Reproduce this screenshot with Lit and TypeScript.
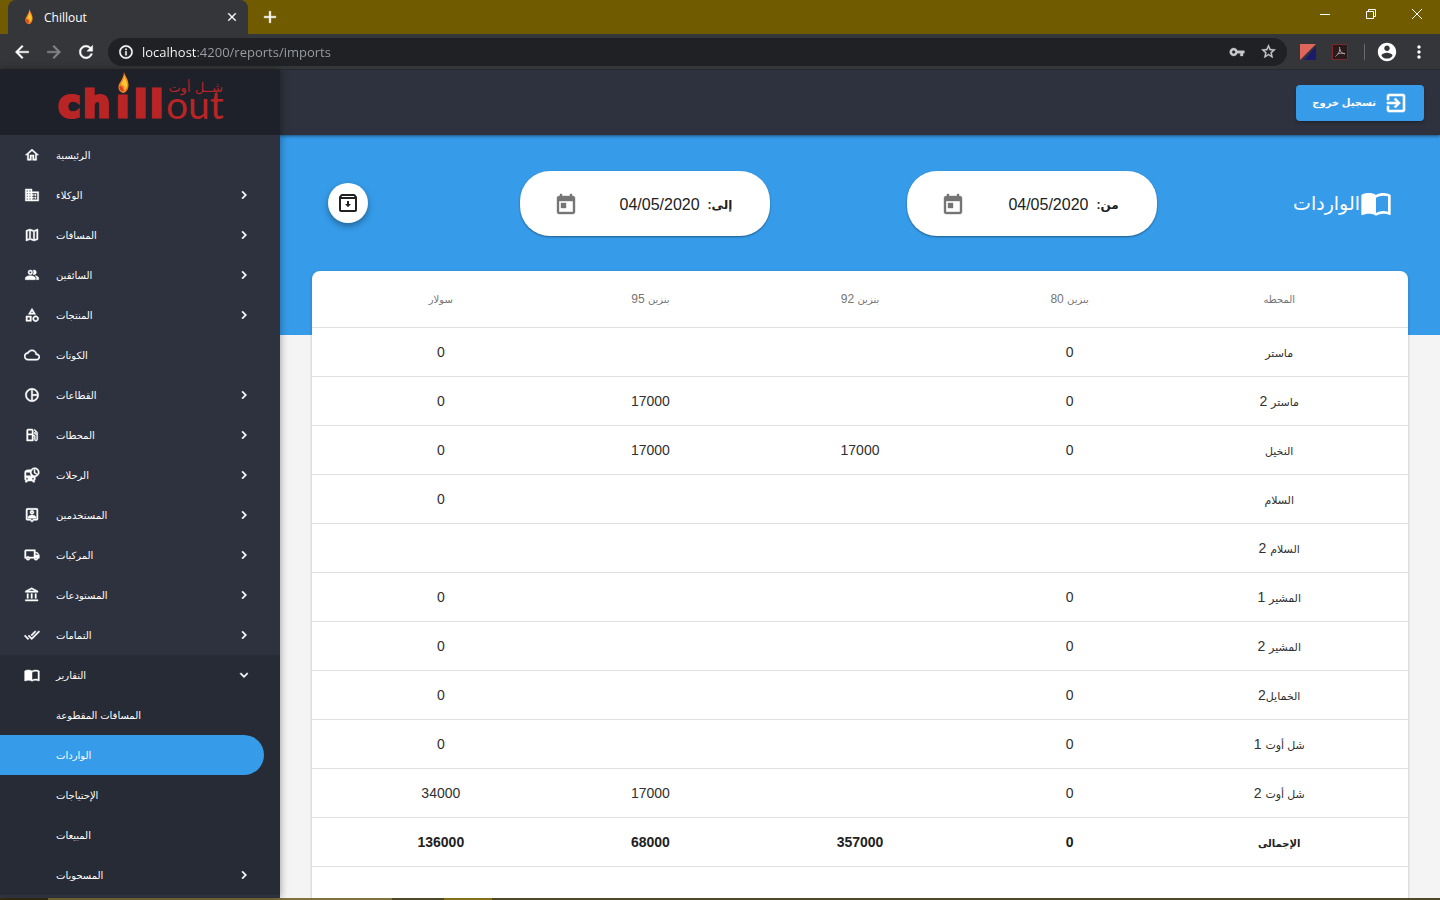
import { LitElement, html, svg, css, nothing } from "lit";
import { customElement, property, state } from "lit/decorators.js";
import { classMap } from "lit/directives/class-map.js";

const ICONS: Record<string, string> = {
  home: "M12 5.69l5 4.5V18h-2v-6H9v6H7v-7.81l5-4.5M12 3L2 12h3v8h6v-6h2v6h6v-8h3L12 3z",
  business: "M12 7V3H2v18h20V7H12zM6 19H4v-2h2v2zm0-4H4v-2h2v2zm0-4H4V9h2v2zm0-4H4V5h2v2zm4 12H8v-2h2v2zm0-4H8v-2h2v2zm0-4H8V9h2v2zm0-4H8V5h2v2zm10 12h-8v-2h2v-2h-2v-2h2v-2h-2V9h8v10zm-2-8h-2v2h2v-2zm0 4h-2v2h2v-2z",
  map: "M20.5 3l-.16.03L15 5.1 9 3 3.36 4.9c-.21.07-.36.25-.36.48V20.5c0 .28.22.5.5.5l.16-.03L9 18.9l6 2.1 5.64-1.9c.21-.07.36-.25.36-.48V3.5c0-.28-.22-.5-.5-.5zM10 5.47l4 1.4v11.66l-4-1.4V5.47zm-5 .99l3-1.01v11.7l-3 1.16V6.46zm14 11.08l-3 1.01V6.86l3-1.16v11.84z",
  people: "M16.5 13.1c1.5.9 2.3 2.1 2.3 3.4V19H22v-2.5c0-1.9-2.8-3.1-5.5-3.4zM15 11.5a3.5 3.5 0 0 0 0-7c-.5 0-.9.1-1.3.2a5.5 5.5 0 0 1 0 6.6c.4.1.8.2 1.3.2zM9.5 11.5a3.5 3.5 0 1 0 0-7 3.5 3.5 0 0 0 0 7zm0-5.2a1.7 1.7 0 1 1 0 3.4 1.7 1.7 0 0 1 0-3.4zM9.5 13C7 13 2 14.2 2 16.6V19h15v-2.4c0-2.4-5-3.6-7.5-3.6z",
  category: "M12 2l-5.5 9h11L12 2zm0 3.84L13.93 9h-3.87L12 5.84zM17.5 13c-2.49 0-4.5 2.01-4.5 4.5s2.01 4.5 4.5 4.5 4.5-2.01 4.5-4.5-2.01-4.5-4.5-4.5zm0 7c-1.38 0-2.5-1.12-2.5-2.5s1.12-2.5 2.5-2.5 2.5 1.12 2.5 2.5-1.12 2.5-2.5 2.5zM3 21.5h8v-8H3v8zm2-6h4v4H5v-4z",
  cloud: "M19.35 10.04C18.67 6.59 15.64 4 12 4 9.11 4 6.6 5.64 5.35 8.04 2.34 8.36 0 10.91 0 14c0 3.31 2.69 6 6 6h13c2.76 0 5-2.24 5-5 0-2.64-2.05-4.78-4.65-4.96zM19 18H6c-2.21 0-4-1.79-4-4 0-2.05 1.53-3.76 3.56-3.97l1.07-.11.5-.95C8.08 7.14 9.94 6 12 6c2.62 0 4.88 1.86 5.39 4.43l.3 1.5 1.53.11c1.56.1 2.78 1.41 2.78 2.96 0 1.65-1.35 3-3 3z",
  pie: "M12 2C6.48 2 2 6.48 2 12s4.48 10 10 10 10-4.48 10-10S17.52 2 12 2zm1 2.07c3.61.45 6.48 3.33 6.93 6.93H13V4.07zM4 12c0-4.06 3.07-7.44 7-7.93v15.87c-3.93-.5-7-3.88-7-7.94zm9 7.93V13h6.93c-.45 3.61-3.32 6.48-6.93 6.93z",
  gas: "M19.77 7.23l.01-.01-3.72-3.72L15 4.56l2.11 2.11c-.94.36-1.61 1.26-1.61 2.33 0 1.38 1.12 2.5 2.5 2.5.36 0 .69-.08 1-.21v7.21c0 .55-.45 1-1 1s-1-.45-1-1V14c0-1.1-.9-2-2-2h-1V5c0-1.1-.9-2-2-2H6c-1.1 0-2 .9-2 2v16h10v-7.5h1.5v5c0 1.38 1.12 2.5 2.5 2.5s2.5-1.12 2.5-2.5V9c0-.69-.28-1.32-.73-1.77zM12 19H6v-7h6v7zm0-9H6V5h6v5zm6 0c-.55 0-1-.45-1-1s.45-1 1-1 1 .45 1 1-.45 1-1 1z",
  departure: "M16 1c-2.4 0-4.52 1.21-5.78 3.05C9.84 4 9.42 4 9 4c-4.42 0-8 .5-8 4v10c0 .88.39 1.67 1 2.22V22c0 .55.45 1 1 1h1c.55 0 1-.45 1-1v-1h8v1c0 .55.45 1 1 1h1c.55 0 1-.45 1-1v-1.78c.61-.55 1-1.34 1-2.22v-3.08c3.39-.49 6-3.39 6-6.92 0-3.87-3.13-7-7-7zM4.5 19c-.83 0-1.5-.67-1.5-1.5S3.67 16 4.5 16s1.5.67 1.5 1.5S5.33 19 4.5 19zM3 13V8h6c0 1.96.81 3.73 2.11 5H3zm10.5 6c-.83 0-1.5-.67-1.5-1.5s.67-1.5 1.5-1.5 1.5.67 1.5 1.5-.67 1.5-1.5 1.5zm2.5-6c-2.76 0-5-2.24-5-5s2.24-5 5-5 5 2.24 5 5-2.24 5-5 5zm.5-9H15v5l3.62 2.16.75-1.23-2.87-1.68z",
  person: "M19 2H5c-1.11 0-2 .9-2 2v14c0 1.1.89 2 2 2h4l3 3 3-3h4c1.1 0 2-.9 2-2V4c0-1.1-.9-2-2-2zm0 16h-4.83L12 20.17 9.83 18H5V4h14v14zM12 11c1.65 0 3-1.35 3-3s-1.35-3-3-3-3 1.35-3 3 1.35 3 3 3zm0-4c.55 0 1 .45 1 1s-.45 1-1 1-1-.45-1-1 .45-1 1-1zm6 8.58c0-2.5-3.97-3.58-6-3.58s-6 1.08-6 3.58V17h12v-1.42z",
  truck: "M20 8h-3V4H3c-1.1 0-2 .9-2 2v11h2c0 1.66 1.34 3 3 3s3-1.34 3-3h6c0 1.66 1.34 3 3 3s3-1.34 3-3h2v-5l-3-4zm-.5 1.5l1.96 2.5H17V9.5h2.5zM6 18c-.55 0-1-.45-1-1s.45-1 1-1 1 .45 1 1-.45 1-1 1zm2.22-3c-.55-.61-1.33-1-2.22-1s-1.67.39-2.22 1H3V6h12v9H8.22zM18 18c-.55 0-1-.45-1-1s.45-1 1-1 1 .45 1 1-.45 1-1 1z",
  bank: "M6.5 10h-2v7h2v-7zm6 0h-2v7h2v-7zm8.5 9H2v2h19v-2zm-2.5-9h-2v7h2v-7zM11.5 1L2 6v2h19V6l-9.5-5zm0 2.26L16.71 6H6.29l5.21-2.74z",
  doneAll: "M18 7l-1.41-1.41-6.34 6.34 1.41 1.41L18 7zm4.24-1.41L11.66 16.17 7.48 12l-1.41 1.41L11.66 19l12-12-1.42-1.41zM.41 13.41L6 19l1.41-1.41L1.83 12 .41 13.41z",
  book: "M21 5c-1.11-.35-2.33-.5-3.5-.5-1.95 0-4.05.4-5.5 1.5-1.45-1.1-3.55-1.5-5.5-1.5S2.45 4.9 1 6v14.65c0 .25.25.5.5.5.1 0 .15-.05.25-.05C3.1 20.45 5.05 20 6.5 20c1.95 0 4.05.4 5.5 1.5 1.35-.85 3.8-1.5 5.5-1.5 1.65 0 3.35.3 4.75 1.05.1.05.15.05.25.05.25 0 .5-.25.5-.5V6c-.6-.45-1.25-.75-2-1zm0 13.5c-1.1-.35-2.3-.5-3.5-.5-1.7 0-4.15.65-5.5 1.5V8c1.35-.85 3.8-1.5 5.5-1.5 1.2 0 2.4.15 3.5.5v11.5z",
  right: "M10 6L8.59 7.41 13.17 12l-4.58 4.59L10 18l6-6z",
  down: "M16.59 8.59L12 13.17 7.41 8.59 6 10l6 6 6-6z",
  exit: "M10.09 15.59L11.5 17l5-5-5-5-1.41 1.41L12.67 11H3v2h9.67l-2.58 2.59zM19 3H5c-1.11 0-2 .9-2 2v4h2V5h14v14H5v-4H3v4c0 1.1.89 2 2 2h14c1.1 0 2-.9 2-2V5c0-1.1-.9-2-2-2z",
  archive: "M20.54 5.23l-1.39-1.68C18.88 3.21 18.47 3 18 3H6c-.47 0-.88.21-1.16.55L3.46 5.23C3.17 5.57 3 6.02 3 6.5V19c0 1.1.9 2 2 2h14c1.1 0 2-.9 2-2V6.5c0-.48-.17-.93-.46-1.27zM6.24 5h11.52l.83 1H5.42l.82-1zM5 19V8h14v11H5zm8-9h-2v3H9l3 3.2 3-3.2h-2z",
  calendar: "M19 3h-1V1h-2v2H8V1H6v2H5c-1.11 0-1.99.9-1.99 2L3 19c0 1.1.89 2 2 2h14c1.1 0 2-.9 2-2V5c0-1.1-.9-2-2-2zm0 16H5V8h14v11zM7 10h5v5H7z",
  back: "M20 11H7.83l5.59-5.59L12 4l-8 8 8 8 1.41-1.41L7.83 13H20v-2z",
  forward: "M12 4l-1.41 1.41L16.17 11H4v2h12.17l-5.58 5.59L12 20l8-8z",
  reload: "M17.65 6.35C16.2 4.9 14.21 4 12 4c-4.42 0-7.99 3.58-7.99 8s3.57 8 7.99 8c3.73 0 6.84-2.55 7.73-6h-2.08c-.82 2.33-3.04 4-5.65 4-3.31 0-6-2.69-6-6s2.69-6 6-6c1.66 0 3.14.69 4.22 1.78L13 11h7V4l-2.35 2.35z",
  info: "M11 7h2v2h-2zm0 4h2v6h-2zm1-9C6.48 2 2 6.48 2 12s4.48 10 10 10 10-4.48 10-10S17.52 2 12 2zm0 18c-4.41 0-8-3.59-8-8s3.59-8 8-8 8 3.59 8 8-3.59 8-8 8z",
  key: "M12.65 10C11.83 7.67 9.61 6 7 6c-3.31 0-6 2.69-6 6s2.69 6 6 6c2.61 0 4.83-1.67 5.65-4H17v4h4v-4h2v-4H12.65zM7 14.5c-1.4 0-2.5-1.1-2.5-2.5s1.1-2.5 2.5-2.5 2.5 1.1 2.5 2.5-1.1 2.5-2.5 2.5z",
  star: "M22 9.24l-7.19-.62L12 2 9.19 8.63 2 9.24l5.46 4.73L5.82 21 12 17.27 18.18 21l-1.63-7.03L22 9.24zM12 15.4l-3.76 2.27 1-4.28-3.32-2.88 4.38-.38L12 6.1l1.71 4.04 4.38.38-3.32 2.88 1 4.28L12 15.4z",
  account: "M12 2C6.48 2 2 6.48 2 12s4.48 10 10 10 10-4.48 10-10S17.52 2 12 2zm0 3c1.66 0 3 1.34 3 3s-1.34 3-3 3-3-1.34-3-3 1.34-3 3-3zm0 14.2c-2.5 0-4.71-1.28-6-3.22.03-1.99 4-3.08 6-3.08 1.99 0 5.97 1.09 6 3.08-1.29 1.94-3.5 3.22-6 3.22z",
  more: "M12 8c1.1 0 2-.9 2-2s-.9-2-2-2-2 .9-2 2 .9 2 2 2zm0 2c-1.1 0-2 .9-2 2s.9 2 2 2 2-.9 2-2-.9-2-2-2zm0 6c-1.1 0-2 .9-2 2s.9 2 2 2 2-.9 2-2-.9-2-2-2z",
  close: "M19 6.41L17.59 5 12 10.59 6.41 5 5 6.41 10.59 12 5 17.59 6.41 19 12 13.41 17.59 19 19 17.59 13.41 12z",
  plus: "M19 13h-6v6h-2v-6H5v-2h6V5h2v6h6v2z",
};

const icon = (name: string, size: number) =>
  html`<svg width=${size} height=${size} viewBox="0 0 24 24" fill="currentColor" aria-hidden="true"><path fill-rule="evenodd" d=${ICONS[name]}></path></svg>`;

const flame = svg`
  <path fill="#f58220" d="M6 0C7 4 10.5 7 10.5 13c0 4-2 7-4.7 8C2 20.5 0 17.5.5 14 1 10.5 5.5 7 6 0z"></path>
  <path fill="#fdc82f" d="M6 3c.8 4 3.4 6 3.2 10-.2 2.5-1.5 4-2.7 5 .5-4-.5-5-3.5-5C4 10 6 8 6 3z"></path>
  <path fill="#d8431f" d="M1.5 14c2 0 4 1.5 4 5.5C3 19.5 1 17 1.5 14z"></path>`;

@customElement("browser-bar")
export class BrowserBar extends LitElement {
  static styles = css`
    :host { display: block; font-family: "Open Sans", "Noto Sans", sans-serif; color: #fff; background: #35363a; }
    svg { display: block; flex: none; }
    button { display: flex; align-items: center; justify-content: center; border: 0; padding: 0; background: none; color: inherit; }
    .tabs { display: flex; height: 34px; background: #705b00; padding-left: 8px; }
    .tab { display: flex; align-items: center; width: 240px; box-sizing: border-box; padding: 0 8px 0 16px; background: #35363a; border-radius: 8px 8px 0 0; font-size: 12px; }
    .tab span { flex: 1; padding-left: 10px; }
    .tab button { width: 16px; height: 16px; }
    .tab button svg, .add svg, .nav svg, .address svg { stroke: currentColor; stroke-width: 0.5; }
    .add { width: 44px; }
    .window { display: flex; margin-left: auto; }
    .window button { width: 46px; height: 28px; }
    .bar { display: flex; align-items: center; height: 36px; padding: 0 11px 0 12px; box-sizing: border-box; border-bottom: 1px solid #28292d; }
    .nav { width: 20px; height: 20px; margin-right: 12px; }
    .off { color: #85868a; }
    .address { display: flex; align-items: center; flex: 1; height: 28px; padding: 0 10px; border-radius: 14px; background: #202124; }
    .url { flex: 1; min-width: 0; margin: 0 8px; border: 0; padding: 0; outline: 0; font: inherit; font-size: 13px; color: transparent; background: linear-gradient(90deg, #fff 55px, #9aa0a6 55px); -webkit-background-clip: text; background-clip: text; }
    .tools { display: flex; align-items: center; gap: 15px; color: #c8cacd; }
    .ext { display: flex; align-items: center; gap: 12px; padding-left: 13px; }
    .ext svg { margin-right: 3px; }
    .line { width: 1px; height: 16px; background: #6b6c70; }
    .ext button { width: 20px; height: 20px; }
    .ext button svg { margin: 0; }
  `;
  render() {
    return html`
      <div class="tabs">
        <div class="tab">
          <svg width="10" height="16" viewBox="0 0 11 22" aria-hidden="true">${flame}</svg>
          <span>Chillout</span>
          <button aria-label="Close tab">${icon("close", 14)}</button>
        </div>
        <button class="add" aria-label="New tab">${icon("plus", 20)}</button>
        <div class="window">
          <button aria-label="Minimize"><svg width="10" height="10" viewBox="0 0 10 10" stroke="#fff"><path d="M0 5.5h10"></path></svg></button>
          <button aria-label="Restore"><svg width="10" height="10" viewBox="0 0 10 10" stroke="#fff" fill="none"><path d="M.5 2.5h7v7h-7zM2.500 2.500v-2h7v7h-2"></path></svg></button>
          <button aria-label="Close"><svg width="10" height="10" viewBox="0 0 10 10" stroke="#fff"><path d="M0 0l10 10M10 0L0 10"></path></svg></button>
        </div>
      </div>
      <div class="bar">
        <button class="nav" aria-label="Back">${icon("back", 20)}</button>
        <button class="nav off" aria-label="Forward">${icon("forward", 20)}</button>
        <button class="nav" aria-label="Reload">${icon("reload", 20)}</button>
        <div class="address">
          ${icon("info", 16)}
          <input class="url" type="text" aria-label="Address" value="localhost:4200/reports/imports" />
          <div class="tools">${icon("key", 16)}${icon("star", 17)}</div>
        </div>
        <div class="ext">
          <svg width="16" height="16" viewBox="0 0 16 16" aria-hidden="true"><path fill="#e0655a" d="M0 0h16L0 16z"></path><path fill="#1b1a6b" d="M16 2v14H4z"></path></svg>
          <svg width="18" height="18" viewBox="0 0 18 18" fill="none" aria-hidden="true"><path fill="#2a1a1c" stroke="#7a2a2c" d="M1.5 1.5h15v15h-15z"></path><path stroke="#a9a9ab" d="M8.5 4c1 4-1.5 7.5-4 9.5M8.8 6c.5 3 2.5 4.5 5.2 5M6.500 11c2-1 4-1 7.500-.4"></path></svg>
          <span class="line"></span>
          <button aria-label="Profile">${icon("account", 22)}</button>
          <button aria-label="Menu">${icon("more", 20)}</button>
        </div>
      </div>
    `;
  }
}

interface NavItem { label: string; icon?: string; expandable?: boolean; current?: boolean; children?: NavItem[] }

const NAV: NavItem[] = [
  { label: "الرئيسية", icon: "home" },
  { label: "الوكلاء", icon: "business", expandable: true },
  { label: "المسافات", icon: "map", expandable: true },
  { label: "السائقين", icon: "people", expandable: true },
  { label: "المنتجات", icon: "category", expandable: true },
  { label: "الكوتات", icon: "cloud" },
  { label: "القطاعات", icon: "pie", expandable: true },
  { label: "المحطات", icon: "gas", expandable: true },
  { label: "الرحلات", icon: "departure", expandable: true },
  { label: "المستخدمين", icon: "person", expandable: true },
  { label: "المركبات", icon: "truck", expandable: true },
  { label: "المستودعات", icon: "bank", expandable: true },
  { label: "التمامات", icon: "doneAll", expandable: true },
  {
    label: "التقارير", icon: "book", expandable: true,
    children: [
      { label: "المسافات المقطوعة" },
      { label: "الواردات", current: true },
      { label: "الإحتياجات" },
      { label: "المبيعات" },
      { label: "المسحوبات", expandable: true },
    ],
  },
];

@customElement("side-nav")
export class SideNav extends LitElement {
  @state() private open = "التقارير";

  static styles = css`
    :host { display: flex; flex-direction: column; width: 280px; flex: none; overflow: hidden; background: #2d323e; color: #fff; box-shadow: 0 0 8px rgba(0, 0, 0, 0.4); z-index: 2; }
    svg { display: block; flex: none; }
    .brand { display: flex; justify-content: center; height: 65px; flex: none; background: #1e2129; }
    .menu { list-style: none; margin: 0; padding: 0; }
    .item { display: flex; align-items: center; width: 100%; height: 40px; padding: 0 28px 0 24px; box-sizing: border-box; border: 0; background: none; color: inherit; font: inherit; font-size: 10px; text-decoration: none; text-align: left; }
    .item span { flex: 1; padding-left: 16px; text-align: left; }
    .item svg { stroke: currentColor; stroke-width: 0.7; }
    .sub .item span { padding-left: 32px; }
    .opened { background: #272b35; }
    .sub .current { width: 264px; background: #369be9; border-radius: 0 20px 20px 0; }
  `;

  private row(item: NavItem): unknown {
    const opened = !!item.children && this.open === item.label;
    const body = html`${item.icon ? icon(item.icon, 16) : nothing}<span>${item.label}</span>${item.expandable ? icon(opened ? "down" : "right", 16) : nothing}`;
    return html`
      <li class=${classMap({ opened })}>
        ${item.expandable
          ? html`<button class="item" aria-expanded=${opened ? "true" : "false"} @click=${() => (this.open = opened ? "" : item.label)}>${body}</button>`
          : html`<a class=${classMap({ item: true, current: !!item.current })} href="#">${body}</a>`}
        ${opened ? html`<ul class="menu sub">${item.children!.map((c) => this.row(c))}</ul>` : nothing}
      </li>`;
  }

  render() {
    return html`
      <div class="brand">
        <svg width="170" height="65" viewBox="0 0 170 65" role="img" aria-label="Chillout">
          <g fill="#b92525">
            <text x="3 28 61 79 95" y="47" font-family="'DejaVu Sans', sans-serif" font-size="38" font-weight="700" stroke="#b92525" stroke-width="3">chıll</text>
            <text x="111" y="49" font-family="Lato, sans-serif" font-size="39">out</text>
            <text x="168" y="22" font-size="13" font-family="'DejaVu Sans', sans-serif" text-anchor="end" direction="ltr">شــل أوت</text>
          </g>
          <svg x="63" y="2" width="11" height="22" viewBox="0 0 11 22">${flame}</svg>
        </svg>
      </div>
      <nav><ul class="menu">${NAV.map((i) => this.row(i))}</ul></nav>
    `;
  }
}

interface Row { name: string; num?: string; values: string[]; total?: boolean }

const ROWS: Row[] = [
  { name: "ماستر", values: ["0", "", "", "0"] },
  { name: "ماستر", num: " 2", values: ["0", "", "17000", "0"] },
  { name: "النخيل", values: ["0", "17000", "17000", "0"] },
  { name: "السلام", values: ["", "", "", "0"] },
  { name: "السلام", num: " 2", values: ["", "", "", ""] },
  { name: "المشير", num: " 1", values: ["0", "", "", "0"] },
  { name: "المشير", num: " 2", values: ["0", "", "", "0"] },
  { name: "الخمايل", num: "2", values: ["0", "", "", "0"] },
  { name: "شل أوت", num: " 1", values: ["0", "", "", "0"] },
  { name: "شل أوت", num: " 2", values: ["0", "", "17000", "34000"] },
  { name: "الإجمالى", values: ["0", "357000", "68000", "136000"], total: true },
];

@customElement("date-pill")
export class DatePill extends LitElement {
  @property() label = "";
  @property() value = "";

  static styles = css`
    :host { display: flex; align-items: center; width: 250px; height: 65px; box-sizing: border-box; padding: 4px 38px 0 26px; border-radius: 30px; background: #fff; color: #212121; box-shadow: 0 1px 2px rgba(0, 0, 0, 0.4); }
    label { font-size: 12px; font-weight: 700; }
    input { flex: 1; min-width: 0; border: 0; padding: 0 8px 0 0; background: none; color: inherit; font: inherit; font-size: 16px; text-align: right; }
    button { display: flex; align-items: center; justify-content: center; width: 40px; height: 40px; border: 0; padding: 0; background: none; color: #757575; }
    svg { stroke: currentColor; stroke-width: 0.4; }
  `;
  render() {
    return html`
      <label for="date">${this.label}</label>
      <input id="date" type="text" dir="ltr" .value=${this.value} />
      <button aria-label="فتح التقويم">${icon("calendar", 24)}</button>
    `;
  }
}

@customElement("imports-report")
export class ImportsReport extends LitElement {
  static styles = css`
    :host { display: flex; flex-direction: column; flex: 1; min-width: 0; overflow: hidden; direction: rtl; background: #f4f4f4; }
    svg { display: block; flex: none; }
    .top { display: flex; align-items: center; height: 65px; flex: none; padding: 0 16px; background: #2d323e; box-shadow: 0 1px 3px rgba(0, 0, 0, 0.5); z-index: 1; }
    .logout { display: flex; align-items: center; gap: 8px; height: 36px; padding: 0 16px; border: 0; border-radius: 4px; background: #369be9; color: #fff; font: inherit; font-size: 10px; font-weight: 700; box-shadow: 0 2px 3px rgba(0, 0, 0, 0.25); }
    .logout svg { stroke: currentColor; stroke-width: 0.6; }
    .body { display: flex; flex-direction: column; flex: 1; min-height: 0; padding: 0 32px; background: linear-gradient(#369be9 200px, transparent 200px); }
    .head { display: flex; align-items: center; justify-content: space-between; height: 136px; flex: none; padding: 0 16px; }
    .title { display: flex; align-items: center; margin: 0; color: #fff; font-size: 19px; font-weight: 400; }
    .export { display: flex; align-items: center; justify-content: center; width: 40px; height: 40px; margin-right: 16px; border: 0; border-radius: 50%; padding: 0; background: #fff; color: #212121; box-shadow: 0 3px 6px rgba(0, 0, 0, 0.35); }
    .card { flex: none; background: #fff; border-radius: 8px; box-shadow: 0 1px 3px rgba(0, 0, 0, 0.25); }
    table { display: block; width: 100%; }
    thead, tbody { display: block; }
    tr { display: flex; align-items: center; height: 48px; padding: 0 24px; border-bottom: 1px solid #e0e0e0; }
    thead tr { height: 56px; }
    th, td { flex: 1; padding: 0; text-align: center; font-size: 14px; font-weight: 400; color: #303030; }
    .ar { font-size: 11px; }
    thead th { font-size: 12px; color: #757575; }
    thead .ar { font-size: 10px; }
    .total th, .total td { font-weight: 700; color: #212121; }
    .total .ar { font-size: 10px; }
    .pager { height: 72px; }
  `;
  render() {
    const heads = [["المحطه", ""], ["بنزين", " 80"], ["بنزين", " 92"], ["بنزين", " 95"], ["سولار", ""]];
    return html`
      <header class="top"><button class="logout">${icon("exit", 24)}<span>تسجيل خروج</span></button></header>
      <main class="body">
        <div class="head">
          <h1 class="title">${icon("book", 32)}<span>الواردات</span></h1>
          <date-pill label="من:" value="04/05/2020"></date-pill>
          <date-pill label="إلى:" value="04/05/2020"></date-pill>
          <button class="export" aria-label="تصدير">${icon("archive", 24)}</button>
        </div>
        <section class="card">
          <table>
            <thead><tr>${heads.map(([n, d]) => html`<th scope="col"><span class="ar">${n}</span>${d}</th>`)}</tr></thead>
            <tbody>
              ${ROWS.map((r) => html`<tr class=${classMap({ total: !!r.total })}>
                <th scope="row"><span class="ar">${r.name}</span>${r.num ?? nothing}</th>
                ${r.values.map((v) => html`<td>${v}</td>`)}
              </tr>`)}
            </tbody>
          </table>
          <div class="pager"></div>
        </section>
      </main>
    `;
  }
}

@customElement("app-root")
export class AppRoot extends LitElement {
  static styles = css`
    :host { display: flex; flex-direction: column; height: 100vh; overflow: hidden; font-family: "Liberation Sans", "DejaVu Sans", sans-serif; }
    browser-bar { flex: none; }
    .app { display: flex; flex: 1; min-height: 0; }
    .taskbar { flex: none; height: 2px; background: linear-gradient(90deg, #3a3010 48px, #80733a 48px 392px, #4f4729 392px 444px, #83721a 444px 492px, #4f4729 492px); }
  `;
  render() {
    return html`
      <browser-bar></browser-bar>
      <div class="app"><side-nav></side-nav><imports-report></imports-report></div>
      <div class="taskbar"></div>
    `;
  }
}
